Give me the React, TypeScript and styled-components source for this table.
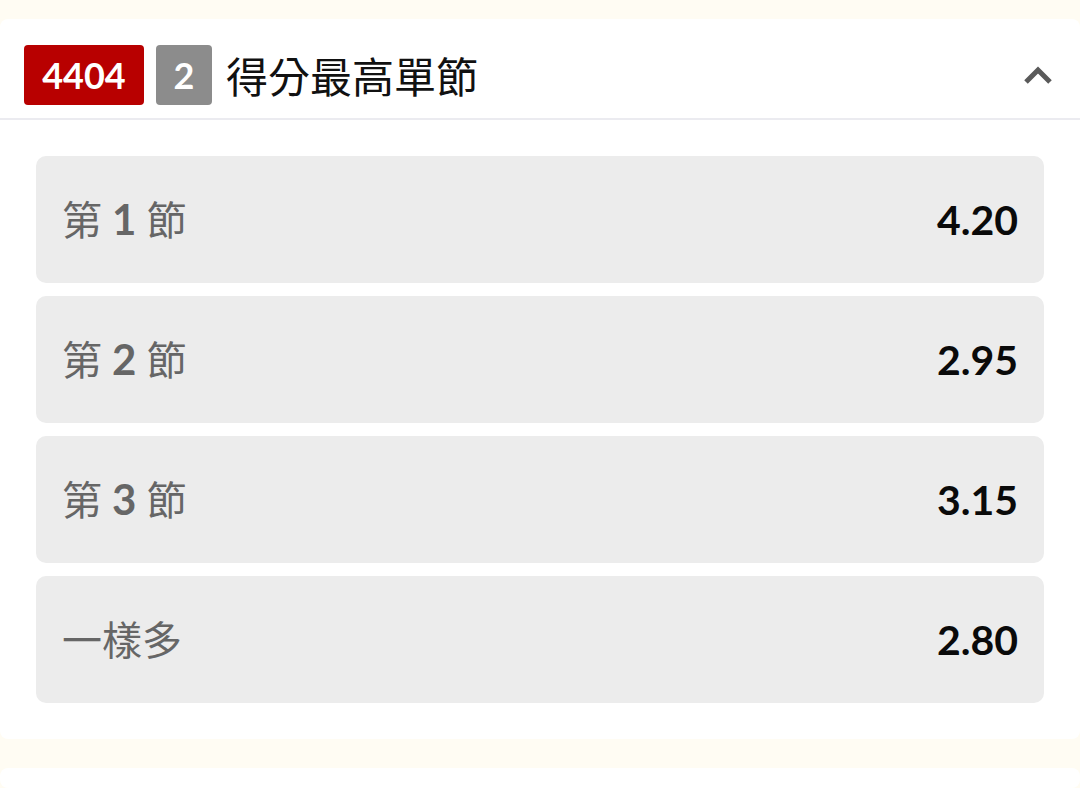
import * as React from 'react';
import styled, { createGlobalStyle } from 'styled-components';

const GlobalStyle = createGlobalStyle`
  html, body {
    margin: 0;
    padding: 0;
    background: #fffcf3;
    overflow: hidden;
  }
  body {
    font-family: Lato, "Noto Sans CJK TC", sans-serif;
  }
`;

const odds = [
  { pre: '第', num: '1', post: '節', value: '4.20' },
  { pre: '第', num: '2', post: '節', value: '2.95' },
  { pre: '第', num: '3', post: '節', value: '3.15' },
  { pre: '一樣多', num: '', post: '', value: '2.80' },
];

export default function App() {
  return (
    <>
      <GlobalStyle />
      <Page>
        <MarketCard>
          <MarketHeader>
            <MatchBadge>4404</MatchBadge>
            <NumberBadge>2</NumberBadge>
            <MarketTitle>得分最高單節</MarketTitle>
            <CollapseButton aria-label="收起">
              <ChevronUp />
            </CollapseButton>
          </MarketHeader>
          <OddsList>
            {odds.map((o) => (
              <OddsRow key={o.pre + o.num}>
                <OddsLabel>
                  {o.pre}
                  {o.num && <LabelNum>{o.num}</LabelNum>}
                  {o.post}
                </OddsLabel>
                <OddsValue>{o.value}</OddsValue>
              </OddsRow>
            ))}
          </OddsList>
        </MarketCard>
        <MarketCard $stub />
      </Page>
    </>
  );
}

function ChevronUp() {
  return (
    <svg width="30" height="20" viewBox="0 0 30 20">
      <path d="M3 17 L15 5 L27 17" fill="none" stroke="#5a5a5a" strokeWidth="5" strokeLinejoin="miter" />
    </svg>
  );
}

const Page = styled.div`
  display: flex;
  flex-direction: column;
  gap: 29px;
  padding-top: 19px;
`;

const MarketCard = styled.section<{ $stub?: boolean }>`
  background: #ffffff;
  border-radius: 8px;
  height: ${({ $stub }) => ($stub ? '20px' : 'auto')};
`;

const MarketHeader = styled.header`
  display: flex;
  align-items: center;
  height: 87px;
  padding: 12px 24px 0;
  border-bottom: 2px solid #ebebf0;
`;

const MatchBadge = styled.span`
  display: inline-flex;
  align-items: center;
  justify-content: center;
  width: 120px;
  height: 60px;
  border-radius: 4px;
  background: #b80000;
  color: #fff;
  font-family: Lato, sans-serif;
  font-weight: 700;
  font-size: 36px;
`;

const NumberBadge = styled(MatchBadge)`
  width: 56px;
  margin-left: 12px;
  background: #8c8c8c;
`;

const MarketTitle = styled.h2`
  margin: 0 0 0 14px;
  flex: 1;
  font-family: "Noto Sans CJK TC", sans-serif;
  font-weight: 400;
  font-size: 42px;
  color: #111;
`;

const CollapseButton = styled.button`
  display: flex;
  align-items: center;
  justify-content: center;
  border: none;
  background: none;
  padding: 0;
  margin-right: 3px;
  cursor: pointer;
`;

const OddsList = styled.div`
  display: flex;
  flex-direction: column;
  gap: 13px;
  padding: 36px;
`;

const OddsRow = styled.div`
  display: flex;
  align-items: center;
  justify-content: space-between;
  height: 127px;
  padding: 0 26px;
  border-radius: 10px;
  background: #ececec;
`;

const OddsLabel = styled.span`
  font-family: "Noto Sans CJK TC", sans-serif;
  font-weight: 400;
  font-size: 40px;
  color: #666;
  margin-top: -4px;
`;

const LabelNum = styled.span`
  font-family: Lato, sans-serif;
  font-weight: 700;
  font-size: 42px;
  margin: 0 10px;
`;

const OddsValue = styled.span`
  font-family: Lato, sans-serif;
  font-weight: 700;
  font-size: 41px;
  color: #0a0a0a;
`;
